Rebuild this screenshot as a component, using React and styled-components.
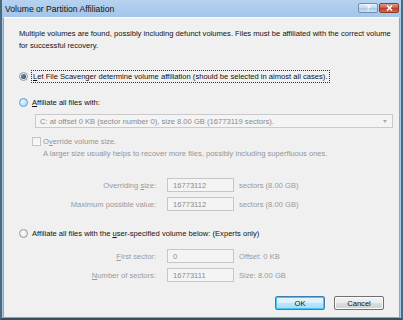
import React from 'react';
import styled, { createGlobalStyle } from 'styled-components';

const Global = createGlobalStyle`
  html, body { margin: 0; padding: 0; background: #fff; }
  body { font-family: "Liberation Sans", Arial, sans-serif; }
`

const Frame = styled.div`
  width: 403px;
  height: 320px;
  box-sizing: border-box;
  display: flex;
  flex-direction: column;
  background: #a7c8eb;
  border-left: 2px solid #4e6a78;
  border-right: 2px solid #4e6a78;
  border-bottom: 2px solid #34505e;
`
const TitleBar = styled.div`
  height: 17px;
  flex: none;
  display: flex;
  align-items: center;
  padding: 0 2px 0 3px;
  background: linear-gradient(#b6d2ef, #a3c5ea);
`
const Title = styled.div`
  flex: 1;
  font-size: 8.6px;
  color: #111;
  white-space: nowrap;
`
const CaptionButton = styled.div`
  width: 20px;
  height: 10px;
  box-sizing: border-box;
  border: 1px solid ${(p) => (p.close ? '#8c3a2a' : '#6f8fae')};
  border-radius: 2px;
  display: flex;
  align-items: center;
  justify-content: center;
  margin-left: ${(p) => (p.close ? '1px' : '0')};
  margin-bottom: 2px;
  background: ${(p) =>
    p.close
      ? 'linear-gradient(#e5a08f, #c8533c 50%, #b63a22 51%, #d46a4f)'
      : 'linear-gradient(#e6f0fa, #c3d7ec 50%, #aac6e4 51%, #cfe1f2)'};
`
const Client = styled.div`
  flex: 1;
  margin-left: 1px;
  margin-right: 1px;
  border-top: 1px solid #fbfbfb;
  border-left: 1px solid #8aa6bd;
  border-right: 1px solid #8aa6bd;
  border-bottom: 1px solid #8aa6bd;
  background: #f0f0f0;
  padding: 10px 0 0 15px;
  font-size: 7.6px;
  color: #111;
  overflow: hidden;
`
const Para = styled.div`
  line-height: 12px;
  white-space: nowrap;
`
const Row = styled.div`
  display: flex;
  align-items: center;
  height: ${(p) => p.h || 12}px;
  margin-top: ${(p) => p.mt || 0}px;
  padding-left: ${(p) => p.indent || 0}px;
  white-space: nowrap;
  color: ${(p) => (p.disabled ? '#959595' : '#111')};
`
const Radio = styled.span`
  width: 9px;
  height: 9px;
  box-sizing: border-box;
  border-radius: 50%;
  flex: none;
  margin-right: 4px;
  border: 1px solid ${(p) => (p.hot ? '#5b9bd0' : '#9a9a9a')};
  background: ${(p) =>
    p.hot
      ? 'radial-gradient(circle at 40% 40%, #e8f4fd, #a9d3f2)'
      : 'radial-gradient(circle at 40% 40%, #fdfdfd, #dcdcdc)'};
  display: flex;
  align-items: center;
  justify-content: center;
  &::after {
    content: '';
    display: ${(p) => (p.checked ? 'block' : 'none')};
    width: 5px;
    height: 5px;
    border-radius: 50%;
    background: radial-gradient(circle at 40% 40%, #6a88b0, #1f3b66);
  }
`
const Check = styled.span`
  width: 9px;
  height: 9px;
  box-sizing: border-box;
  flex: none;
  margin-right: 2px;
  border: 1px solid #c4c4c4;
  background: linear-gradient(#f2f2f2, #fafafa);
`
const Focus = styled.span`
  outline: 1px dotted #333;
  outline-offset: 0;
  padding: 0 1px;
  line-height: 11px;
`
const Combo = styled.div`
  height: 14px;
  box-sizing: border-box;
  margin: 6px 0 0 16px;
  width: 358px;
  border: 1px solid #cacaca;
  background: #f4f4f4;
  display: flex;
  align-items: center;
  padding: 0 5px 0 4px;
  color: #8a8a8a;
  white-space: nowrap;
`
const ComboText = styled.span`
  flex: 1;
`
const Arrow = styled.span`
  width: 0;
  height: 0;
  border-left: 2.5px solid transparent;
  border-right: 2.5px solid transparent;
  border-top: 3px solid #a8a8a8;
`
const Desc = styled.div`
  margin: 1px 0 0 24px;
  line-height: 12px;
  color: #959595;
  white-space: nowrap;
`
const Field = styled.div`
  display: flex;
  align-items: center;
  height: 14px;
  margin-top: ${(p) => p.mt}px;
  white-space: nowrap;
  color: #9a9a9a;
`
const FieldLabel = styled.span`
  width: 137px;
  text-align: right;
  margin-right: 11px;
  flex: none;
`
const Input = styled.span`
  width: 67px;
  height: 14px;
  box-sizing: border-box;
  border: 1px solid #c6c6c6;
  background: #f4f4f4;
  padding-left: 5px;
  display: flex;
  align-items: center;
  color: #8c8c8c;
  margin-right: 5px;
  flex: none;
`
const Buttons = styled.div`
  display: flex;
  justify-content: flex-end;
  gap: 9px;
  margin-top: 14px;
  padding-right: 15px;
`
const Button = styled.div`
  width: 50px;
  height: 14px;
  box-sizing: border-box;
  border: 1px solid ${(p) => (p.primary ? '#3c7fb1' : '#707070')};
  border-radius: 2px;
  display: flex;
  align-items: center;
  justify-content: center;
  color: #111;
  background: ${(p) =>
    p.primary
      ? 'linear-gradient(#eaf6fd, #d9f0fc 50%, #bee6fd 51%, #a7d9f5)'
      : 'linear-gradient(#f2f2f2, #ebebeb 50%, #dddddd 51%, #cfcfcf)'};
  box-shadow: ${(p) => (p.primary ? 'inset 0 0 0 1px #48c4f4' : 'inset 0 0 0 1px #fcfcfc')};
`
const U = styled.span`
  text-decoration: underline;
`

export default function App() {
  return (
    <>
      <Global />
      <Frame>
        <TitleBar>
          <Title>Volume or Partition Affiliation</Title>
          <CaptionButton>
            <svg width="6" height="7" viewBox="0 0 6 7">
              <path d="M1 2 Q1 0.5 3 0.5 Q5 0.5 5 2 Q5 3 3.2 3.6 L3.2 4.6" fill="none" stroke="#fff" strokeWidth="1.2" />
              <rect x="2.6" y="5.4" width="1.2" height="1.2" fill="#fff" />
            </svg>
          </CaptionButton>
          <CaptionButton close>
            <svg width="7" height="6" viewBox="0 0 7 6">
              <path d="M1 0.5 L6 5.5 M6 0.5 L1 5.5" stroke="#fff" strokeWidth="1.6" />
            </svg>
          </CaptionButton>
        </TitleBar>
        <Client>
          <Para>
            Multiple volumes are found, possibly including defunct volumes. Files must be affiliated with the correct volume
            <br />
            for successful recovery.
          </Para>

          <Row mt={18}>
            <Radio checked />
            <Focus><U>L</U>et File Scavenger determine volume affiliation (should be selected in almost all cases).</Focus>
          </Row>

          <Row mt={14}>
            <Radio hot />
            <span><U>A</U>ffiliate all files with:</span>
          </Row>
          <Combo>
            <ComboText>C: at offset 0 KB (sector number 0), size 8.00 GB (16773119 sectors).</ComboText>
            <Arrow />
          </Combo>

          <Row mt={7} indent={13} disabled>
            <Check />
            <span>O<U>v</U>erride volume size.</span>
          </Row>
          <Desc>A larger size usually helps to recover more files, possibly including superfluous ones.</Desc>

          <Field mt={18}>
            <FieldLabel>Overriding <U>s</U>ize:</FieldLabel>
            <Input>16773112</Input>
            <span>sectors (8.00 GB)</span>
          </Field>
          <Field mt={5}>
            <FieldLabel>Maximum possible value:</FieldLabel>
            <Input>16773112</Input>
            <span>sectors (8.00 GB)</span>
          </Field>

          <Row mt={16}>
            <Radio />
            <span>Affiliate all files with the <U>u</U>ser-specified volume below: (Experts only)</span>
          </Row>

          <Field mt={10}>
            <FieldLabel><U>F</U>irst sector:</FieldLabel>
            <Input>0</Input>
            <span>Offset: 0 KB</span>
          </Field>
          <Field mt={5}>
            <FieldLabel><U>N</U>umber of sectors:</FieldLabel>
            <Input>16773111</Input>
            <span>Size: 8.00 GB</span>
          </Field>

          <Buttons>
            <Button primary>OK</Button>
            <Button>Cancel</Button>
          </Buttons>
        </Client>
      </Frame>
    </>
  );
}
